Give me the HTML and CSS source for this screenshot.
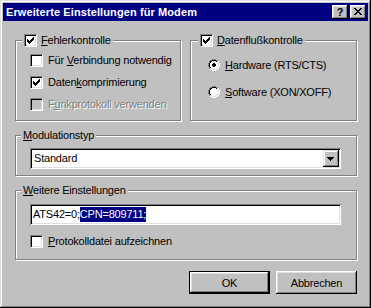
FILE: index.html
```html
<!DOCTYPE html>
<html lang="de">
<head>
<meta charset="utf-8">
<title>Erweiterte Einstellungen für Modem</title>
<link rel="stylesheet" href="styles.css">
</head>
<body>
<div class="window">
  <div class="titlebar">
    <span class="title">Erweiterte Einstellungen für Modem</span>
    <div class="tbtns">
      <span class="tbtn help">?</span>
      <span class="tbtn close"><svg width="8" height="7" viewBox="0 0 8 7" shape-rendering="crispEdges"><path d="M0 0h2v1h-2z M6 0h2v1h-2z M1 1h2v1h-2z M5 1h2v1h-2z M2 2h4v1h-4z M3 3h2v1h-2z M2 4h4v1h-4z M1 5h2v1h-2z M5 5h2v1h-2z M0 6h2v1h-2z M6 6h2v1h-2z" fill="#000"/></svg></span>
    </div>
  </div>
  <div class="body">
    <div class="row">
      <div class="group g-err">
        <div class="legend lg-err">
          <span class="cb"><svg class="chk" width="11" height="11" viewBox="1 1 11 11" shape-rendering="crispEdges"><path d="M9 3h1v1h-1z M8 4h2v1h-2z M3 5h1v1h-1z M7 5h3v1h-3z M3 6h2v1h-2z M6 6h3v1h-3z M3 7h5v1h-5z M4 8h3v1h-3z M5 9h1v1h-1z" fill="#000"/></svg></span>
          <span class="lbl"><u>F</u>ehlerkontrolle</span>
        </div>
        <div class="items">
          <div class="opt"><span class="cb"></span><span class="lbl">Für <u>V</u>erbindung notwendig</span></div>
          <div class="opt"><span class="cb"><svg class="chk" width="11" height="11" viewBox="1 1 11 11" shape-rendering="crispEdges"><path d="M9 3h1v1h-1z M8 4h2v1h-2z M3 5h1v1h-1z M7 5h3v1h-3z M3 6h2v1h-2z M6 6h3v1h-3z M3 7h5v1h-5z M4 8h3v1h-3z M5 9h1v1h-1z" fill="#000"/></svg></span><span class="lbl">Daten<u>k</u>omprimierung</span></div>
          <div class="opt disabled"><span class="cb off"></span><span class="lbl">F<u>u</u>nkprotokoll verwenden</span></div>
        </div>
      </div>
      <div class="group g-flow">
        <div class="legend lg-flow">
          <span class="cb"><svg class="chk" width="11" height="11" viewBox="1 1 11 11" shape-rendering="crispEdges"><path d="M9 3h1v1h-1z M8 4h2v1h-2z M3 5h1v1h-1z M7 5h3v1h-3z M3 6h2v1h-2z M6 6h3v1h-3z M3 7h5v1h-5z M4 8h3v1h-3z M5 9h1v1h-1z" fill="#000"/></svg></span>
          <span class="lbl"><u>D</u>atenflußkontrolle</span>
        </div>
        <div class="radios">
          <div class="opt r"><svg class="radio" width="12" height="12" viewBox="0 0 12 12" shape-rendering="crispEdges"><path d="M4 2h4v1h-4z M3 3h6v1h-6z M2 4h8v4h-8z M3 8h6v1h-6z M4 9h4v1h-4z" fill="#fff"/><path d="M4 0h4v1h-4z M2 1h2v1h-2z M8 1h2v1h-2z M1 2h1v2h-1z M0 4h1v4h-1z M1 8h1v2h-1z" fill="#808080"/><path d="M10 2h1v2h-1z M11 4h1v4h-1z M10 8h1v2h-1z M2 10h2v1h-2z M8 10h2v1h-2z M4 11h4v1h-4z" fill="#fff"/><path d="M4 1h4v1h-4z M2 2h2v1h-2z M8 2h1v1h-1z M2 3h1v1h-1z M1 4h1v4h-1z M2 8h1v1h-1z" fill="#000"/><path d="M9 2h1v2h-1z M10 4h1v4h-1z M9 8h1v1h-1z M2 9h2v1h-2z M8 9h2v1h-2z M4 10h4v1h-4z" fill="#dfdfdf"/><path d="M5 4h2v1h1v2h-1v1h-2v-1h-1v-2h1z" fill="#000"/></svg><span class="lbl"><u>H</u>ardware (RTS/CTS)</span></div>
          <div class="opt r"><svg class="radio" width="12" height="12" viewBox="0 0 12 12" shape-rendering="crispEdges"><path d="M4 2h4v1h-4z M3 3h6v1h-6z M2 4h8v4h-8z M3 8h6v1h-6z M4 9h4v1h-4z" fill="#fff"/><path d="M4 0h4v1h-4z M2 1h2v1h-2z M8 1h2v1h-2z M1 2h1v2h-1z M0 4h1v4h-1z M1 8h1v2h-1z" fill="#808080"/><path d="M10 2h1v2h-1z M11 4h1v4h-1z M10 8h1v2h-1z M2 10h2v1h-2z M8 10h2v1h-2z M4 11h4v1h-4z" fill="#fff"/><path d="M4 1h4v1h-4z M2 2h2v1h-2z M8 2h1v1h-1z M2 3h1v1h-1z M1 4h1v4h-1z M2 8h1v1h-1z" fill="#000"/><path d="M9 2h1v2h-1z M10 4h1v4h-1z M9 8h1v1h-1z M2 9h2v1h-2z M8 9h2v1h-2z M4 10h4v1h-4z" fill="#dfdfdf"/></svg><span class="lbl"><u>S</u>oftware (XON/XOFF)</span></div>
        </div>
      </div>
    </div>
    <div class="group g-mod">
      <div class="legend lg-text"><span class="lbl"><u>M</u>odulationstyp</span></div>
      <div class="combo">
        <span class="combo-text">Standard</span>
        <span class="drop"><svg width="7" height="4" viewBox="0 0 7 4" shape-rendering="crispEdges"><path d="M0 0h7v1h-1v1h-1v1h-1v1h-1v-1h-1v-1h-1v-1h-1z" fill="#000"/></svg></span>
      </div>
    </div>
    <div class="group g-more">
      <div class="legend lg-text"><span class="lbl"><u>W</u>eitere Einstellungen</span></div>
      <div class="field"><span class="field-text">ATS42=0;<span class="sel">CPN=809711;</span></span></div>
      <div class="opt proto"><span class="cb"></span><span class="lbl"><u>P</u>rotokolldatei aufzeichnen</span></div>
    </div>
    <div class="buttons">
      <div class="btn default">OK</div>
      <div class="btn">Abbrechen</div>
    </div>
  </div>
</div>
</body>
</html>
```
FILE: styles.css
```css
* { box-sizing: border-box; }
html, body { margin: 0; padding: 0; }
body {
  width: 371px;
  height: 308px;
  background: #c0c0c0;
  font-family: "Liberation Sans", Arial, sans-serif;
  font-size: 11px;
  letter-spacing: -0.2px;
  color: #000;
}
u { text-decoration: underline; text-underline-offset: 1px; }

.window {
  width: 371px;
  height: 308px;
  background: #c0c0c0;
  padding: 3px;
  display: flex;
  flex-direction: column;
  box-shadow: inset -1px -1px #000, inset 1px 1px #dfdfdf, inset -2px -2px #808080, inset 2px 2px #fff;
}

.titlebar {
  height: 18px;
  background: #000080;
  color: #fff;
  display: flex;
  align-items: center;
  padding: 0 2px 0 3px;
}
.title { font-weight: bold; flex: 1; white-space: nowrap; letter-spacing: 0.1px; }
.tbtns { display: flex; gap: 2px; }
.tbtn {
  width: 16px;
  height: 14px;
  background: #c0c0c0;
  box-shadow: inset -1px -1px #000, inset 1px 1px #fff, inset -2px -2px #808080, inset 2px 2px #dfdfdf;
  display: flex;
  align-items: center;
  justify-content: center;
  color: #000;
  font-weight: bold;
  font-size: 11px;
  line-height: 14px;
}
.tbtn.close svg { display: block; margin-top: -1px; }

.body {
  flex: 1;
  padding: 19px 11px 0 12px;
  display: flex;
  flex-direction: column;
}

.row { display: flex; gap: 9px; height: 81px; }

.group {
  position: relative;
  border: 1px solid #808080;
  box-shadow: inset 1px 1px #fff, 1px 1px #fff;
}
.g-err { width: 166px; padding: 13px 0 0 14px; }
.g-flow { flex: 1; padding: 18px 0 0 17px; }
.g-mod { height: 41px; margin-top: 14px; padding: 12px 0 0 14px; }
.g-more { height: 70px; margin-top: 14px; padding: 13px 0 0 14px; }

.legend {
  position: absolute;
  top: -7px;
  height: 13px;
  padding: 0 2px;
  background: #c0c0c0;
  display: flex;
  align-items: center;
  gap: 4px;
  white-space: nowrap;
}
.lg-err { left: 6px; }
.lg-flow { left: 7px; }
.lg-text { left: 5px; }

.items { display: flex; flex-direction: column; gap: 9px; }
.radios { display: flex; flex-direction: column; gap: 15px; }

.opt {
  display: flex;
  align-items: center;
  gap: 5px;
  height: 13px;
  white-space: nowrap;
}
.opt.r { height: 12px; gap: 5px; }
.lbl { line-height: 13px; }

.cb {
  width: 13px;
  height: 13px;
  flex: none;
  background: #fff;
  border: 1px solid;
  border-color: #808080 #fff #fff #808080;
  box-shadow: inset 1px 1px #000, inset -1px -1px #dfdfdf;
}
.cb.off { background: #c0c0c0; }
.chk, .radio { display: block; flex: none; }

.disabled .lbl { color: #808080; text-shadow: 1px 1px 0 #fff; }

.combo {
  width: 311px;
  height: 21px;
  background: #fff;
  padding: 2px;
  display: flex;
  align-items: stretch;
  box-shadow: inset 1px 1px #808080, inset -1px -1px #fff, inset 2px 2px #000, inset -2px -2px #dfdfdf;
}
.combo-text { flex: 1; padding-left: 2px; line-height: 17px; }
.drop {
  width: 16px;
  background: #c0c0c0;
  box-shadow: inset -1px -1px #000, inset 1px 1px #dfdfdf, inset -2px -2px #808080, inset 2px 2px #fff;
  display: flex;
  align-items: center;
  justify-content: center;
}
.drop svg { display: block; margin-left: -1px; }

.field {
  width: 311px;
  height: 21px;
  background: #fff;
  padding: 2px 2px 2px 3px;
  display: flex;
  align-items: center;
  box-shadow: inset 1px 1px #808080, inset -1px -1px #fff, inset 2px 2px #000, inset -2px -2px #dfdfdf;
}
.field-text { line-height: 15px; white-space: nowrap; }
.sel { background: #000080; color: #fff; display: inline-block; line-height: 15px; }

.proto { margin-top: 10px; }

.buttons {
  display: flex;
  justify-content: flex-end;
  gap: 6px;
  margin-top: 11px;
}
.btn {
  width: 81px;
  height: 23px;
  background: #c0c0c0;
  display: flex;
  align-items: center;
  justify-content: center;
  box-shadow: inset -1px -1px #000, inset 1px 1px #fff, inset -2px -2px #808080, inset 2px 2px #dfdfdf;
}
.btn.default {
  border: 1px solid #000;
}
```
